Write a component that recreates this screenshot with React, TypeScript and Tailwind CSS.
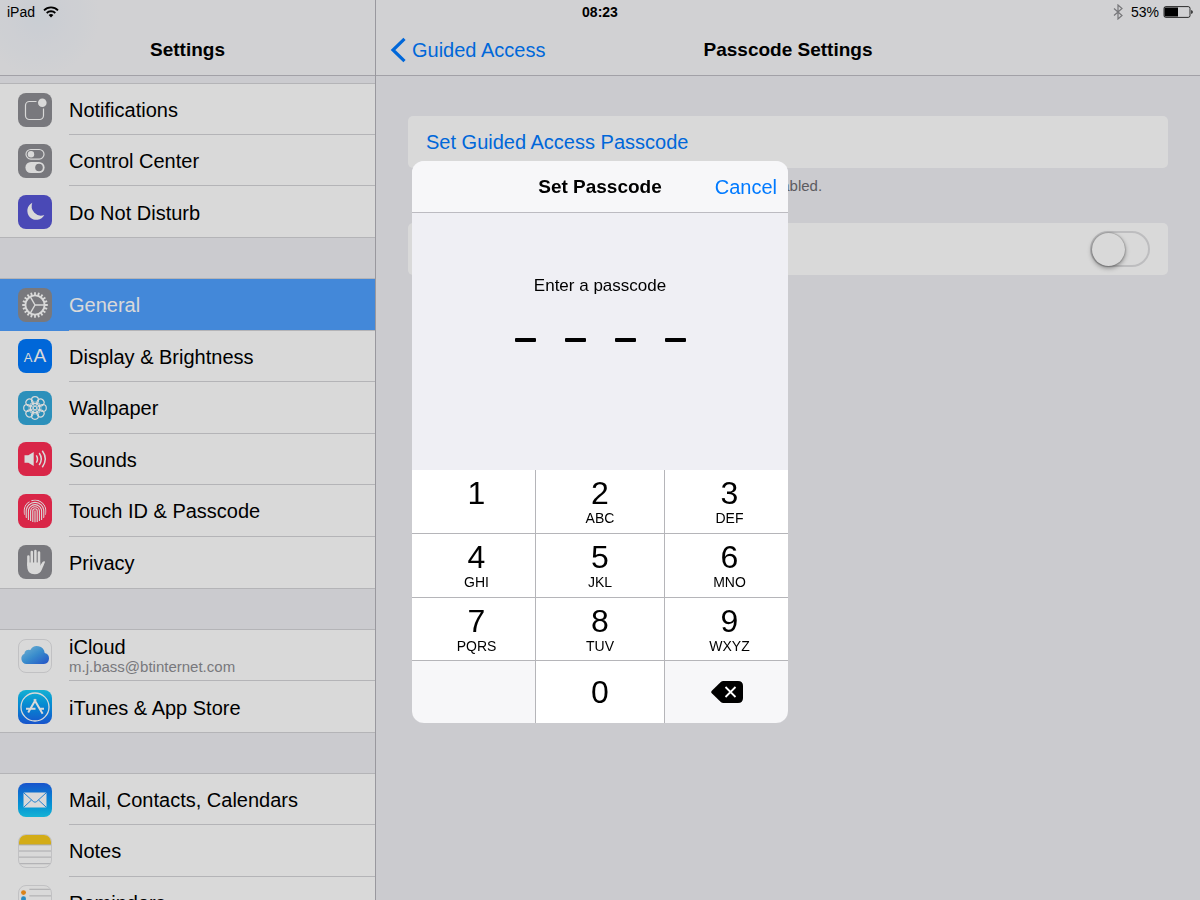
import { useState, type ReactNode } from "react";

function Tile({ className = "", children }: { className?: string; children: ReactNode }) {
  return (
    <span className={`size-[34px] shrink-0 overflow-hidden rounded-lg ${className}`}>
      <svg viewBox="0 0 34 34" className="size-full" fill="none" stroke="white" aria-hidden="true">
        {children}
      </svg>
    </span>
  );
}

const twenty = Array.from({ length: 20 }, (_, i) => i * 18);
const eight = Array.from({ length: 8 }, (_, i) => i * 45);

const NotificationsIcon = () => (
  <Tile className="bg-[#8e8e93]">
    <path d="M18.500 8.500h-7a4 4 0 0 0-4 4v10a4 4 0 0 0 4 4h10a4 4 0 0 0 4-4v-7" strokeWidth="1.200" />
    <circle cx="24.300" cy="9.800" r="4.300" fill="white" stroke="none" />
  </Tile>
);

const ControlCenterIcon = () => (
  <Tile className="bg-[#8e8e93]">
    <rect x="8" y="5.500" width="18" height="9.600" rx="4.800" strokeWidth="1.200" />
    <circle cx="13" cy="10.300" r="3.200" fill="white" stroke="none" />
    <rect x="7.400" y="18" width="19.200" height="11" rx="5.500" fill="white" stroke="none" />
    <circle cx="21" cy="23.500" r="3.800" fill="#8e8e93" stroke="none" />
  </Tile>
);

const MoonIcon = () => (
  <Tile className="bg-[#5856d6]">
    <path d="M14.300 7.800a9 9 0 1 0 12 12.200A9.400 9.400 0 0 1 14.300 7.800z" fill="white" stroke="none" />
  </Tile>
);

const GearIcon = () => (
  <Tile className="bg-[#8e8e93]">
    <circle cx="17" cy="17" r="9.600" strokeWidth="1.900" />
    {twenty.map((a) => (
      <path key={a} d="M17 4.200v3.200" strokeWidth="1.800" transform={`rotate(${a} 17 17)`} />
    ))}
    {[90, 210, 330].map((a) => (
      <path key={a} d="M17 17V8" strokeWidth="1.400" transform={`rotate(${a} 17 17)`} />
    ))}
  </Tile>
);

const DisplayIcon = () => (
  <span className="flex size-[34px] shrink-0 items-baseline justify-center gap-px rounded-lg bg-[#007aff] leading-[34px] text-white">
    <span className="text-[13px]">A</span>
    <span className="text-[19px]">A</span>
  </span>
);

const WallpaperIcon = () => (
  <Tile className="bg-[#34aadc]">
    {eight.map((a) => (
      <g key={a} transform={`rotate(${a} 17 17)`}>
        <circle cx="17" cy="9.200" r="3.500" strokeWidth="1.200" />
        <path d="M17 15.500c-2.200-1.600-2.200-3.400 0-5 2.200 1.600 2.200 3.400 0 5z" strokeWidth=".7" />
      </g>
    ))}
    <circle cx="17" cy="17" r="1.700" strokeWidth=".8" />
  </Tile>
);

const SoundsIcon = () => (
  <Tile className="bg-[#ff2d55]">
    <path d="M6.500 13.300h3.800l5.400-3.400v14.200l-5.400-3.400H6.500z" fill="white" stroke="none" />
    <path d="M18.300 13.300q2.400 3.700 0 7.400M21.200 11q4.200 6 0 12M24.300 8.800q6 8.200 0 16.400" strokeWidth="1.500" />
  </Tile>
);

const TouchIdIcon = () => (
  <Tile className="bg-[#ff2d55]">
    <clipPath id="print">
      <circle cx="17" cy="17" r="11.500" />
    </clipPath>
    <g clipPath="url(#print)" strokeWidth="1.100">
      <path d="M17 16.500v12M14.800 28V17a2.200 2.200 0 0 1 4.400 0v11" />
      <path d="M12.600 27v-9.800a4.400 4.400 0 0 1 8.800 0V27" />
      <path d="M10.400 26v-8.800a6.600 6.600 0 0 1 13.200 0V26" />
      <path d="M8.200 24v-6.800a8.800 8.800 0 0 1 17.600 0V24" />
      <path d="M6.100 21v-4a10.900 10.900 0 0 1 5.400-9.400M13.400 6.700a10.900 10.900 0 0 1 14.500 10.300v4" />
    </g>
  </Tile>
);

const HandIcon = () => (
  <Tile className="bg-[#8e8e93]">
    <path d="M10.400 11.500V20M13.800 7v12M17.400 6v13M21 7.500V20" strokeWidth="2.500" strokeLinecap="round" />
    <path
      d="M9.200 17.500h13v3.300c1-1.700 1.800-3.200 2.600-4 .9-.9 2.400-.6 2.200.3-.7 2-2 4.600-3 7.200-1.300 3.300-3.600 5-7.200 5-5 0-7.600-3-7.600-8z"
      fill="white"
      stroke="none"
    />
  </Tile>
);

const CloudIcon = () => (
  <Tile className="border border-[#e3e3e6] bg-white">
    <defs>
      <linearGradient id="cloud" x1="0" y1="0" x2="1" y2="1">
        <stop offset="0" stopColor="#8fd6f8" />
        <stop offset=".5" stopColor="#43a5f0" />
        <stop offset="1" stopColor="#2a60ea" />
      </linearGradient>
    </defs>
    <path
      d="M8 25.500A5.700 5.700 0 0 1 5.700 14.700 4.600 4.600 0 0 1 12 10.600 8.200 8.200 0 0 1 27.300 13.700 6 6 0 0 1 26.500 25.500z"
      fill="url(#cloud)"
      stroke="none"
    />
  </Tile>
);

const AppStoreIcon = () => (
  <Tile className="bg-linear-to-b from-[#1ad0f8] to-[#1d62f0]">
    <circle cx="17" cy="17" r="14" strokeWidth="1.300" />
    <path d="M17.900 9.300 10.200 22.500M16.100 9.300l8.500 14.400M8 18.700h9.500M21.500 18.700H26" strokeWidth="2" />
  </Tile>
);

const MailIcon = () => (
  <Tile className="bg-linear-to-b from-[#1d62f0] to-[#19d2fb]">
    <rect x="5.500" y="9.500" width="23" height="15" rx="1" fill="white" stroke="none" />
    <path d="m6 10 9.300 8.500q1.700 1.500 3.400 0L28 10M6 24l7.500-7M28 24l-7.500-7" stroke="#2a9af5" strokeWidth="1" />
  </Tile>
);

const NotesIcon = () => (
  <Tile className="border border-[#e3e3e6] bg-white">
    <rect x="-1" y="-1" width="36" height="11.500" fill="#f8cb1c" stroke="none" />
    <path d="M0 10.500h34M0 17h34M0 23.500h34M0 30.500h34" stroke="#c4c4c8" />
  </Tile>
);

const RemindersIcon = () => (
  <Tile className="border border-[#e3e3e6] bg-white">
    <path d="M11 3.500h23M11 10.500h23M11 17.500h23M11 24.500h23" stroke="#c4c4c8" />
    <g stroke="none">
      <circle cx="4.800" cy="7" r="2.600" fill="#ff9a1f" />
      <circle cx="4.800" cy="13.500" r="2.600" fill="#2fa4e7" />
      <circle cx="4.800" cy="20" r="2.600" fill="#58c33a" />
    </g>
  </Tile>
);

type Item = { label: string; icon: ReactNode; detail?: string; active?: boolean };

const groups: { height: string; items: Item[] }[] = [
  {
    height: "h-[155px]",
    items: [
      { label: "Notifications", icon: <NotificationsIcon /> },
      { label: "Control Center", icon: <ControlCenterIcon /> },
      { label: "Do Not Disturb", icon: <MoonIcon /> },
    ],
  },
  {
    height: "h-[311px]",
    items: [
      { label: "General", icon: <GearIcon />, active: true },
      { label: "Display & Brightness", icon: <DisplayIcon /> },
      { label: "Wallpaper", icon: <WallpaperIcon /> },
      { label: "Sounds", icon: <SoundsIcon /> },
      { label: "Touch ID & Passcode", icon: <TouchIdIcon /> },
      { label: "Privacy", icon: <HandIcon /> },
    ],
  },
  {
    height: "h-[104px]",
    items: [
      { label: "iCloud", icon: <CloudIcon />, detail: "m.j.bass@btinternet.com" },
      { label: "iTunes & App Store", icon: <AppStoreIcon /> },
    ],
  },
  {
    height: "h-[156px]",
    items: [
      { label: "Mail, Contacts, Calendars", icon: <MailIcon /> },
      { label: "Notes", icon: <NotesIcon /> },
      { label: "Reminders", icon: <RemindersIcon /> },
    ],
  },
];

const keys = [
  ["1", ""],
  ["2", "ABC"],
  ["3", "DEF"],
  ["4", "GHI"],
  ["5", "JKL"],
  ["6", "MNO"],
  ["7", "PQRS"],
  ["8", "TUV"],
  ["9", "WXYZ"],
];

function StatusBar() {
  return (
    <div className="absolute inset-x-0 top-0 grid h-6 grid-cols-3 items-center px-[7px] text-sm">
      <div className="flex items-center gap-2">
        iPad
        <svg viewBox="0 0 16 12" className="h-3 w-4" fill="none" stroke="black" strokeWidth="1.800" aria-label="Wi-Fi">
          <path d="M1 4.300a10 10 0 0 1 14 0M3.700 7a6.200 6.200 0 0 1 8.600 0" />
          <path d="M8 11.500 5.600 9.100a3.400 3.400 0 0 1 4.800 0z" fill="black" stroke="none" />
        </svg>
      </div>
      <div className="text-center font-bold">08:23</div>
      <div className="flex items-center justify-end gap-1">
        <svg viewBox="0 0 10 16" className="mr-1 h-4 w-2.5" fill="none" stroke="#8b8b8f" strokeWidth="1.200" aria-label="Bluetooth">
          <path d="m1 4.500 8 7L5 15V1l4 3.500-8 7" />
        </svg>
        53%
        <svg viewBox="0 0 30 12" className="h-3 w-[30px]" aria-label="Battery">
          <rect x="1" y=".6" width="26" height="10.800" rx="1.800" fill="none" stroke="black" strokeWidth=".8" />
          <rect x="1.500" y="1.500" width="13.500" height="9" fill="black" />
          <path d="M28.300 4q1.400.4 1.400 2t-1.400 2z" fill="black" />
        </svg>
      </div>
    </div>
  );
}

function Row({ item, last }: { item: Item; last: boolean }) {
  return (
    <a
      href="#"
      className={`flex min-h-0 items-center gap-[17px] pl-[18px] ${item.active ? "bg-[#4fa0ff] text-white" : ""}`}
    >
      {item.icon}
      <span
        className={`flex h-full min-w-0 flex-1 flex-col justify-center ${last ? "" : "border-b border-[#d4d4d8]"}`}
      >
        <span className={item.detail ? "pt-1 leading-5" : "pt-0.5 leading-6"}>{item.label}</span>
        {item.detail && <span className="text-[15px] leading-5 text-[#8e8e93]">{item.detail}</span>}
      </span>
    </a>
  );
}

function Sidebar() {
  return (
    <aside className="flex w-[376px] shrink-0 flex-col overflow-hidden border-r border-[#b4b3ba]">
      <header className="flex h-19 shrink-0 items-center justify-center border-b border-[#bfbec5] bg-[#f6f6f8] bg-[radial-gradient(circle_at_40px_16px,#edf2f8,#f6f6f8_60px)] pt-6">
        <h1 className="text-[19px] leading-6 font-bold">Settings</h1>
      </header>
      <nav className="flex flex-col gap-10 pt-[7px] text-xl">
        {groups.map((group) => (
          <div
            key={group.items[0].label}
            className={`grid shrink-0 auto-rows-fr border-y border-[#d4d4d8] bg-white ${group.height}`}
          >
            {group.items.map((item, i) => (
              <Row key={item.label} item={item} last={i === group.items.length - 1} />
            ))}
          </div>
        ))}
      </nav>
    </aside>
  );
}

function Detail() {
  return (
    <main className="flex-1">
      <header className="grid h-19 grid-cols-[1fr_auto_1fr] items-center border-b border-[#bfbec5] bg-[#f6f6f8] px-3.5 pt-6">
        <a href="#" className="flex items-center gap-1.5 text-xl leading-6 text-[#007aff]">
          <svg viewBox="0 0 16 26" className="h-[26px] w-4" fill="none" stroke="currentColor" strokeWidth="3.200" aria-hidden="true">
            <path d="M14.500 1.800 3 13l11.500 11.200" />
          </svg>
          Guided Access
        </a>
        <h2 className="text-[19px] leading-6 font-bold">Passcode Settings</h2>
      </header>
      <div className="px-8 pt-10">
        <button type="button" className="h-[52px] w-full rounded-[5px] bg-white px-[18px] text-left text-xl text-[#007aff]">
          Set Guided Access Passcode
        </button>
        <p className="px-[18px] pt-1.5 text-[15px] leading-6 text-[#6d6d72]">
          Pick a passcode used whenever Guided Access is enabled.
        </p>
        <div className="mt-[25px] flex h-[52px] items-center justify-between rounded-[5px] bg-white px-[18px] text-xl">
          <label htmlFor="touch-id">Touch ID</label>
          <input
            id="touch-id"
            type="checkbox"
            role="switch"
            className="flex h-9 w-[60px] appearance-none items-center rounded-full border-2 border-[#dfdfe1] before:size-[33px] before:rounded-full before:bg-white before:shadow-[0_2px_5px_rgba(0,0,0,0.4),0_0_2px_rgba(0,0,0,0.4)] checked:justify-end checked:bg-[#4cd964]"
          />
        </div>
      </div>
    </main>
  );
}

function PasscodeDialog() {
  const [code, setCode] = useState("");
  const press = (digit: string) => setCode((c) => (c.length < 4 ? c + digit : c));

  return (
    <div className="fixed inset-0 flex items-center justify-center bg-black/15 pb-4">
      <div role="dialog" aria-labelledby="dialog-title" className="w-[376px] overflow-hidden rounded-xl bg-[#efeff4]">
        <header className="grid h-[52px] grid-cols-[1fr_auto_1fr] items-center border-b border-[#bcbbc1] bg-[#f7f7f9] px-[11px]">
          <span />
          <h2 id="dialog-title" className="text-[19px] leading-6 font-bold">
            Set Passcode
          </h2>
          <button type="button" className="text-right text-xl leading-6 text-[#007aff]">
            Cancel
          </button>
        </header>
        <div className="flex h-[257px] flex-col items-center pt-[61px]">
          <p className="text-[17px] leading-6">Enter a passcode</p>
          <div className="flex h-21 items-center gap-[29px]">
            {[0, 1, 2, 3].map((i) => (
              <span
                key={i}
                className={i < code.length ? "mx-0.5 size-[17px] rounded-full bg-black" : "h-1 w-[21px] rounded-[1px] bg-black"}
              />
            ))}
          </div>
        </div>
        <div className="grid grid-cols-[123fr_128fr_123fr] grid-rows-[63px_63px_62px_62px] gap-px bg-[#b5b5b9]">
          {keys.map(([digit, letters], i) => (
            <button
              key={digit}
              type="button"
              onClick={() => press(digit)}
              className={`flex flex-col items-center bg-white pt-1.5 ${i % 3 === 1 ? "" : "pl-1.5"}`}
            >
              <span className="text-[32px] leading-[34px]">{digit}</span>
              <span className="text-[14px] leading-4">{letters}</span>
            </button>
          ))}
          <span className="bg-[#f7f7f9]" />
          <button type="button" onClick={() => press("0")} className="bg-white text-[32px] leading-9">
            0
          </button>
          <button
            type="button"
            aria-label="Delete"
            onClick={() => setCode((c) => c.slice(0, -1))}
            className="flex items-center justify-center bg-[#f7f7f9]"
          >
            <svg viewBox="0 0 32 22" className="h-[22px] w-8" aria-hidden="true">
              <path d="M9.500 1.200Q10.800 0 12.500 0H27q5 0 5 5v12q0 5-5 5H12.500q-1.700 0-3-1.200L.8 12.300Q-.4 11 .8 9.700z" />
              <path d="m14.500 6 10 10m0-10-10 10" stroke="white" strokeWidth="1.800" />
            </svg>
          </button>
        </div>
      </div>
    </div>
  );
}

export default function App() {
  return (
    <div className="relative flex h-screen overflow-hidden bg-[#efeff4] font-['Liberation_Sans',Arial,sans-serif] text-black">
      <Sidebar />
      <Detail />
      <StatusBar />
      <PasscodeDialog />
    </div>
  );
}
